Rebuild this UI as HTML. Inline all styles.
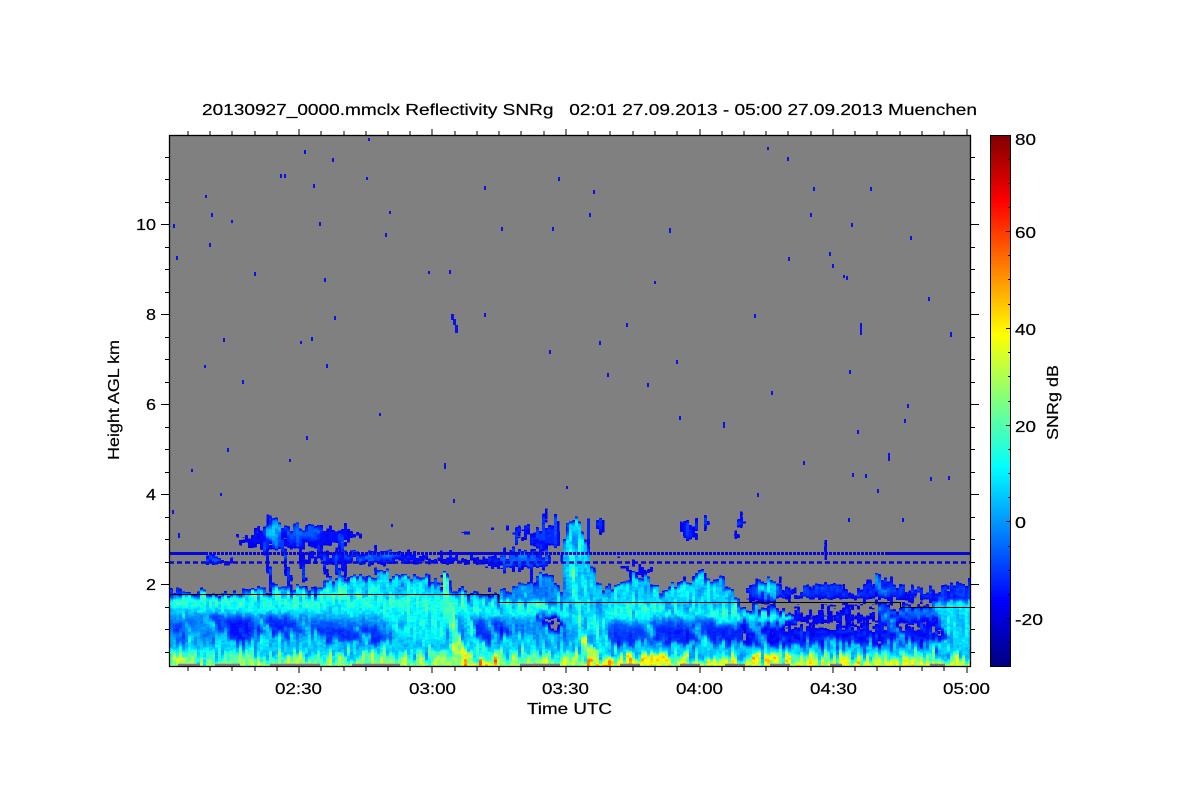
<!DOCTYPE html>
<html><head><meta charset="utf-8"><title>20130927_0000.mmclx Reflectivity SNRg</title>
<style>html,body{margin:0;padding:0;background:#fff}svg{display:block}text{font-family:"Liberation Sans",sans-serif;font-size:16px;fill:#000;stroke:#000;stroke-width:.2px}</style></head>
<body>
<svg width="1200" height="800" viewBox="0 0 1200 800" xmlns="http://www.w3.org/2000/svg">
<defs>
<linearGradient id="jet" x1="0" y1="1" x2="0" y2="0">
<stop offset="0" stop-color="#000080"/><stop offset=".125" stop-color="#0000ff"/><stop offset=".375" stop-color="#00ffff"/><stop offset=".625" stop-color="#ffff00"/><stop offset=".875" stop-color="#ff0000"/><stop offset="1" stop-color="#800000"/>
</linearGradient>
<clipPath id="pc"><rect x="170" y="136" width="800" height="530"/></clipPath>
<filter id="field" filterUnits="userSpaceOnUse" x="150" y="120" width="840" height="570" primitiveUnits="userSpaceOnUse" color-interpolation-filters="sRGB">
<feTurbulence type="fractalNoise" baseFrequency="0.28 0.06" numOctaves="2" seed="7" result="t1"/>
<feColorMatrix in="t1" type="matrix" values="1 0 0 0 0 1 0 0 0 0 1 0 0 0 0 0 0 0 0 1" result="n1"/>
<feColorMatrix in="t1" type="matrix" values="2 0 0 0 -.5 2 0 0 0 -.5 0 0 0 0 .5 0 0 0 0 1" result="dm"/>
<feDisplacementMap in="SourceGraphic" in2="dm" scale="16" xChannelSelector="B" yChannelSelector="R" result="disp"/>
<feTurbulence type="fractalNoise" baseFrequency="0.4 0.4" numOctaves="1" seed="11" result="t2"/>
<feColorMatrix in="t2" type="matrix" values="1 0 0 0 0 1 0 0 0 0 1 0 0 0 0 0 0 0 0 1" result="n2"/>
<feComposite in="n1" in2="n2" operator="arithmetic" k1="0" k2="0.8" k3="0.4" k4="-0.1" result="noise"/>
<feGaussianBlur in="disp" stdDeviation="1.2 1" result="blur"/>
<feComposite in="blur" in2="noise" operator="arithmetic" k1="0.9" k2="0.55" k3="0" k4="0" result="sum"/>
<feFlood x="171" y="120" width="1" height="1" flood-color="#000" result="dot"/>
<feComposite in="dot" in2="dot" x="170" y="120" width="3" height="1" result="cell"/>
<feTile in="cell" result="grid"/>
<feComposite in="sum" in2="grid" operator="in" result="sampled"/>
<feMorphology in="sampled" operator="dilate" radius="1 0" result="px"/>
<feColorMatrix in="px" type="matrix" values="1 0 0 0 0 1 0 0 0 0 1 0 0 0 0 0 0 0 1 0" result="gray"/>
<feComponentTransfer in="gray">
<feFuncR type="discrete" tableValues=".502 .502 .502 .502 0 0 0 0 0 0 0 0 0 0 0 .05 .15 .25 .35 .45 .55 .65 .75 .85 .95 1 1 1 1 1 1 1 1 1 1 .95 .85 .75 .65 .55"/>
<feFuncG type="discrete" tableValues=".502 .502 .502 .502 0 .05 .15 .25 .35 .45 .55 .65 .75 .85 .95 1 1 1 1 1 1 1 1 1 1 .95 .85 .75 .65 .55 .45 .35 .25 .15 .05 0 0 0 0 0"/>
<feFuncB type="discrete" tableValues=".502 .502 .502 .502 .95 1 1 1 1 1 1 1 1 1 1 .95 .85 .75 .65 .55 .45 .35 .25 .15 .05 0 0 0 0 0 0 0 0 0 0 0 0 0 0 0"/>
</feComponentTransfer>
</filter>
</defs>

<rect x="170" y="136" width="800" height="530" fill="#808080"/>

<g clip-path="url(#pc)">
<g filter="url(#field)" fill="none" stroke-linecap="round">
<rect x="150" y="120" width="840" height="570" fill="#000"/>

<!-- upper clouds -->
<polygon fill="#202020" points="229,540 245,534 262,528 300,526 345,526 360,533 350,546 300,550 262,550 240,546"/>
<polygon fill="#4c4c4c" points="264,524 270,519 278,520 282,530 278,544 268,544"/>
<polygon fill="#383838" points="284,527 318,527 324,531 310,538 290,541"/>
<g stroke="#303030" stroke-width="4">
<path d="M264 545L272 586"/><path d="M282 545L290 583"/><path d="M298 540L305 583"/><path d="M318 545L328 573"/><path d="M340 535L345 573"/>
</g>
<g fill="#2a2a2a">
<rect x="357" y="534" width="5" height="8"/>
<rect x="462" y="528" width="10" height="8"/><rect x="488" y="530" width="6" height="4"/>
<rect x="596" y="519" width="8" height="15"/><rect x="586" y="520" width="5" height="24"/>
<rect x="680" y="522" width="3" height="10"/><rect x="684" y="521" width="4" height="24"/><rect x="688" y="520" width="5" height="18"/><rect x="694" y="520" width="4" height="18"/><rect x="703" y="517" width="6" height="12"/>
<rect x="733" y="518" width="13" height="6"/><rect x="736" y="524" width="6" height="8"/><rect x="735" y="530" width="3" height="14"/>
<rect x="825" y="534" width="3" height="28"/>
</g>
<!-- layer 550-570 -->
<polygon fill="#3d3d3d" points="205,556 232,556 235,562 205,563"/>
<polygon fill="#242424" points="300,552 440,553 500,557 540,550 552,560 545,570 490,568 470,564 400,565 300,563"/>
<polygon fill="#3c3c3c" points="345,554 400,554 400,560 345,560"/>
<polygon fill="#3a3a3a" points="495,555 548,550 550,564 500,566"/>
<polygon fill="#2a2a2a" points="530,532 558,518 560,546 530,546"/>
<polygon fill="#242424" points="505,531 530,527 534,536 505,536"/>
<g stroke="#2e2e2e" stroke-width="4"><path d="M545 514L540 546"/><path d="M557 517L556 543"/><path d="M535 555L530 578"/><path d="M335 560L340 580"/><path d="M518 528L516 544"/></g>
<polygon fill="#2a2a2a" points="615,563 640,567 656,571 655,575 628,573"/>
<polygon fill="#2a2a2a" points="690,572 706,572 708,580 692,578"/>

<!-- boundary layer base -->
<polygon fill="#464646" points="150,592 190,591 215,594 250,591 290,589 318,591 500,595 538,595 552,592 600,594 740,600 745,612 760,624 990,624 990,690 150,690"/>
<polygon fill="#565656" points="322,582 345,578 368,575 384,572 400,579 418,575 445,587 470,594 330,598"/>
<polygon fill="#424242" points="500,594 520,586 540,580 552,574 562,602 500,602"/>
<polygon fill="#545454" points="598,594 620,586 630,580 645,578 660,592 680,584 702,578 722,583 738,602 745,608 600,608"/>
<!-- right side blue layer -->
<polygon fill="#2c2c2c" points="745,592 760,580 776,580 790,592 820,584 860,587 878,577 900,587 930,590 950,584 990,582 990,600 745,598"/>
<polygon fill="#525252" points="756,591 768,579 778,584 775,600 760,598"/>
<polygon fill="#464646" points="872,586 880,579 890,587 885,594"/>
<polygon fill="#171717" points="740,600 900,602 990,606 990,628 740,628"/>
<polygon fill="#1b1b1b" points="740,628 990,628 990,650 740,650"/>
<rect x="745" y="630" width="200" height="3" fill="#323232"/>
<rect x="745" y="638" width="200" height="3" fill="#343434"/>
<rect x="800" y="617" width="110" height="3" fill="#2c2c2c"/>
<polygon fill="#3c3c3c" points="880,608 990,606 965,620 900,618"/>
<!-- cyan patch right -->
<polygon fill="#545454" points="932,602 990,600 990,652 952,652 944,630"/>

<!-- bright band -->
<polygon fill="#646464" points="150,597 300,595 440,595 500,601 620,606 740,609 800,618 790,623 640,621 560,617 450,615 300,613 150,612"/>
<polygon fill="#606060" points="380,612 448,612 445,642 400,638"/>

<!-- mid layer patches -->
<polygon fill="#404040" points="150,613 210,612 215,645 150,640"/>
<polygon fill="#303030" points="210,614 300,616 312,642 230,646 215,632"/>
<polygon fill="#242424" points="225,620 248,622 252,636 230,634"/>
<polygon fill="#242424" points="268,622 292,624 298,638 272,636"/>
<polygon fill="#262626" points="172,625 188,623 192,630 174,632"/>
<polygon fill="#2c2c2c" points="310,623 375,625 390,640 325,644"/>
<polygon fill="#484848" points="250,636 300,632 340,640 260,644"/>
<polygon fill="#2c2c2c" points="470,619 500,619 525,632 500,640 470,640"/>
<polygon fill="#171717" points="535,616 558,615 566,630 542,632"/>
<polygon fill="#2e2e2e" points="590,627 650,625 690,645 610,648"/>
<polygon fill="#282828" points="650,625 740,625 745,646 680,646"/>
<polygon fill="#343434" points="645,615 700,615 720,624 660,624"/>
<polygon fill="#323232" points="578,613 590,613 596,638 584,638"/>
<!-- fall streaks -->
<g stroke="#525252" stroke-width="5">
<path d="M180 618L200 640"/><path d="M205 618L232 646"/><path d="M255 615L285 650"/><path d="M295 615L325 650"/><path d="M345 612L372 648"/><path d="M395 612L420 640"/><path d="M478 602L500 646"/><path d="M500 602L522 646"/><path d="M540 620L556 646"/><path d="M640 622L664 648"/><path d="M680 612L708 646"/><path d="M740 612L770 646"/><path d="M880 610L910 646"/>
</g>
<g stroke="#5c5c5c" stroke-width="3">
<path d="M320 592L340 616"/><path d="M345 592L360 612"/><path d="M405 587L430 640"/><path d="M420 582L440 636"/><path d="M632 588L640 605"/><path d="M650 588L665 610"/><path d="M700 588L716 610"/>
</g>

<!-- low cyan band -->
<polygon fill="#525252" points="150,640 990,646 990,654 150,652"/>
<!-- yellow layer -->
<polygon fill="#727272" points="150,651 330,655 460,651 520,653 740,657 990,653 990,690 150,690"/>
<rect x="150" y="656" width="60" height="3" fill="#525252"/>
<rect x="670" y="653" width="190" height="3" fill="#525252"/>
<rect x="150" y="661" width="840" height="29" fill="#828282"/>
<rect x="660" y="660" width="330" height="30" fill="#929292"/>
<rect x="590" y="658" width="70" height="32" fill="#989898"/>

<!-- arcs -->
<path d="M446 582C449 620 456 645 470 662" stroke="#727272" stroke-width="7"/>
<path d="M464 602C467 630 478 650 498 661" stroke="#646464" stroke-width="6"/>
<path d="M456 648L476 664" stroke="#949494" stroke-width="10"/>
<polygon fill="#a8a8a8" points="462,660 498,660 500,680 460,680"/>
<!-- 3:30 spike -->
<polygon fill="#505050" points="562,552 568,530 574,520 582,530 590,562 602,592 612,650 580,650 564,600"/>
<path d="M570 542C574 590 578 630 590 660" stroke="#686868" stroke-width="5"/>
<path d="M580 547C584 590 592 630 606 660" stroke="#5e5e5e" stroke-width="5"/>
<path d="M586 645L606 664" stroke="#8e8e8e" stroke-width="10"/>
<polygon fill="#a8a8a8" points="584,660 612,660 612,680 584,680"/>
<!-- narrow aqua band -->
<polygon fill="#666666" points="600,606 760,612 770,617 640,617"/>
</g>

<!-- dashed echoes -->
<path d="M169 553.5H970" stroke="#0606d8" stroke-width="3" stroke-dasharray="3 1" fill="none"/>
<path d="M169 553.5H206M885 553.5H970M440 553.5H520" stroke="#0606d8" stroke-width="3" fill="none"/>
<path d="M169 562.5H970" stroke="#0606d8" stroke-width="2.5" stroke-dasharray="5 3" fill="none"/>

<!-- gray floor row -->
<path d="M178 665H200M215 665H240M270 665H320M352 665H400M520 665H560M620 665H640M680 665H700M725 665H745M770 665H790M830 665H842M930 665H945" stroke="#808080" stroke-width="2.5" fill="none"/>

<!-- specks -->
<g fill="#0a10e8">
<path d="M173 224h2v4h-2zM176 256h2v4h-2zM205 195h2v3h-2zM211 213h2v4h-2zM209 243h2v4h-2zM231 220h2v3h-2zM254 272h2v4h-2zM304 150h2v4h-2zM280 174h2v4h-2zM284 174h2v4h-2zM313 184h2v4h-2zM319 222h2v4h-2zM332 158h2v4h-2zM368 138h2v3h-2zM366 177h2v3h-2zM389 211h2v3h-2zM385 233h2v4h-2zM428 271h2v3h-2zM449 270h2v4h-2zM324 278h2v4h-2zM334 316h2v4h-2zM300 341h2v3h-2zM311 337h2v4h-2zM326 364h2v4h-2zM204 365h2v3h-2zM223 338h2v4h-2zM242 380h2v4h-2zM379 413h2v3h-2zM306 436h2v4h-2zM289 459h2v3h-2zM191 469h2v3h-2zM227 448h2v4h-2zM220 493h2v3h-2zM178 533h2v5h-2zM484 186h2v4h-2zM558 177h2v4h-2zM593 190h2v4h-2zM589 213h2v4h-2zM501 227h2v4h-2zM552 227h2v4h-2zM669 228h2v5h-2zM654 281h2v3h-2zM813 187h2v4h-2zM810 213h2v4h-2zM829 252h2v4h-2zM832 264h2v4h-2zM788 257h2v4h-2zM846 276h2v4h-2zM851 223h2v4h-2zM870 187h2v4h-2zM910 236h2v4h-2zM928 297h2v4h-2zM950 332h2v5h-2zM754 314h2v4h-2zM860 323h2v12h-2zM849 370h2v4h-2zM771 391h2v4h-2zM723 422h2v6h-2zM679 416h2v4h-2zM647 383h2v4h-2zM676 360h2v4h-2zM607 373h2v4h-2zM549 350h2v4h-2zM599 341h2v4h-2zM626 323h2v4h-2zM484 313h2v4h-2zM444 463h2v6h-2zM453 499h2v4h-2zM566 486h2v3h-2zM888 453h2v8h-2zM907 404h2v4h-2zM904 419h2v4h-2zM852 473h2v4h-2zM865 474h2v4h-2zM877 489h2v4h-2zM857 430h2v4h-2zM948 476h2v4h-2zM930 477h2v4h-2zM803 461h2v4h-2zM757 493h2v4h-2zM848 518h2v4h-2zM902 518h2v4h-2zM767 147h2v3h-2zM787 157h2v4h-2zM168 335h2v4h-2zM172 510h2v4h-2zM391 524h2v3h-2zM843 275h2v3h-2z"/>
<path d="M451 314h3v6h-3zM453 319h3v6h-3zM455 325h3v8h-3z"/>
</g>

<!-- instrument line -->
<path d="M169 594.5H498.5V602.5H900.5V607.5H970" fill="none" stroke="#000" stroke-width="1"/>
</g>

<!-- axes -->
<rect x="169.5" y="135.5" width="801" height="531" fill="none" stroke="#000" stroke-width="1.3"/>
<g stroke="#000" stroke-width="1" fill="none" shape-rendering="crispEdges">
<path d="M188 135v-4M188 667v4M210 135v-4M210 667v4M232 135v-4M232 667v4M255 135v-4M255 667v4M277 135v-4M277 667v4M321 135v-4M321 667v4M344 135v-4M344 667v4M366 135v-4M366 667v4M388 135v-4M388 667v4M410 135v-4M410 667v4M455 135v-4M455 667v4M477 135v-4M477 667v4M499 135v-4M499 667v4M521 135v-4M521 667v4M544 135v-4M544 667v4M588 135v-4M588 667v4M610 135v-4M610 667v4M633 135v-4M633 667v4M655 135v-4M655 667v4M677 135v-4M677 667v4M722 135v-4M722 667v4M744 135v-4M744 667v4M766 135v-4M766 667v4M788 135v-4M788 667v4M811 135v-4M811 667v4M855 135v-4M855 667v4M877 135v-4M877 667v4M900 135v-4M900 667v4M922 135v-4M922 667v4M944 135v-4M944 667v4"/>
<path d="M299 135v-6M299 667v6M432 135v-6M432 667v6M566 135v-6M566 667v6M700 135v-6M700 667v6M833 135v-6M833 667v6M967 135v-6M967 667v6"/>
<path d="M161 224.5h8M161 314.5h8M161 404.5h8M161 494.5h8M161 584.5h8M971 224.5h8M971 314.5h8M971 404.5h8M971 494.5h8M971 584.5h8"/>
<path d="M165 157.5h4M165 179.5h4M165 202.5h4M165 247.5h4M165 269.5h4M165 292.5h4M165 337.5h4M165 359.5h4M165 382.5h4M165 427.5h4M165 449.5h4M165 472.5h4M165 517.5h4M165 539.5h4M165 562.5h4M165 607.5h4M165 629.5h4M165 652.5h4"/>
<path d="M971 157.5h4M971 179.5h4M971 202.5h4M971 247.5h4M971 269.5h4M971 292.5h4M971 337.5h4M971 359.5h4M971 382.5h4M971 427.5h4M971 449.5h4M971 472.5h4M971 517.5h4M971 539.5h4M971 562.5h4M971 607.5h4M971 629.5h4M971 652.5h4"/>
</g>

<!-- colorbar -->
<rect x="990.5" y="135.5" width="20" height="531" fill="url(#jet)" stroke="#000" stroke-width="1"/>
<g stroke="#000" stroke-width="1" shape-rendering="crispEdges">
<path d="M1008 159.5h2M1008 183.5h2M1008 207.5h2M1006 231.5h4M1008 255.5h2M1008 279.5h2M1008 304.5h2M1006 328.5h4M1008 352.5h2M1008 376.5h2M1008 401.5h2M1006 425.5h4M1008 449.5h2M1008 473.5h2M1008 497.5h2M1006 521.5h4M1008 546.5h2M1008 570.5h2M1008 594.5h2M1006 618.5h4M1008 642.5h2"/>
</g>

<!-- text -->
<text x="202" y="115" xml:space="preserve" textLength="775" lengthAdjust="spacingAndGlyphs">20130927_0000.mmclx Reflectivity SNRg   02:01 27.09.2013 - 05:00 27.09.2013 Muenchen</text>
<text x="275" y="694" textLength="47" lengthAdjust="spacingAndGlyphs">02:30</text>
<text x="409" y="694" textLength="47" lengthAdjust="spacingAndGlyphs">03:00</text>
<text x="542" y="694" textLength="47" lengthAdjust="spacingAndGlyphs">03:30</text>
<text x="676" y="694" textLength="47" lengthAdjust="spacingAndGlyphs">04:00</text>
<text x="810" y="694" textLength="47" lengthAdjust="spacingAndGlyphs">04:30</text>
<text x="943" y="694" textLength="47" lengthAdjust="spacingAndGlyphs">05:00</text>
<text x="527" y="714" textLength="85" lengthAdjust="spacingAndGlyphs">Time UTC</text>
<text x="136" y="230" textLength="20" lengthAdjust="spacingAndGlyphs">10</text>
<text x="146" y="320" textLength="10" lengthAdjust="spacingAndGlyphs">8</text>
<text x="146" y="410" textLength="10" lengthAdjust="spacingAndGlyphs">6</text>
<text x="146" y="500" textLength="10" lengthAdjust="spacingAndGlyphs">4</text>
<text x="146" y="590" textLength="10" lengthAdjust="spacingAndGlyphs">2</text>
<text x="1015" y="145" textLength="21" lengthAdjust="spacingAndGlyphs">80</text>
<text x="1015" y="238" textLength="21" lengthAdjust="spacingAndGlyphs">60</text>
<text x="1015" y="335" textLength="21" lengthAdjust="spacingAndGlyphs">40</text>
<text x="1015" y="432" textLength="21" lengthAdjust="spacingAndGlyphs">20</text>
<text x="1015" y="528" textLength="11" lengthAdjust="spacingAndGlyphs">0</text>
<text x="1015" y="625" textLength="28" lengthAdjust="spacingAndGlyphs">-20</text>
<text transform="translate(119,460) rotate(-90)" textLength="120" lengthAdjust="spacingAndGlyphs">Height AGL km</text>
<text transform="translate(1058,440) rotate(-90)" textLength="75" lengthAdjust="spacingAndGlyphs">SNRg dB</text>
</svg>
</body></html>
